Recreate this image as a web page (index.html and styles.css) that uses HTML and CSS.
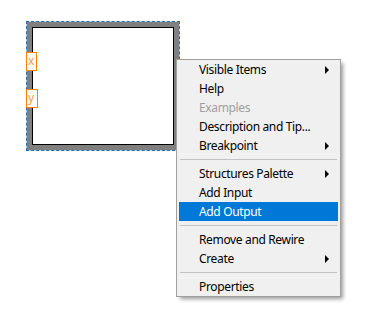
FILE: index.html
```html
<!DOCTYPE html>
<html>
<head>
<meta charset="utf-8">
<link rel="stylesheet" href="styles.css">
</head>
<body>
<div class="canvas">
  <div class="node">
    <div class="frame">
      <div class="pane"></div>
    </div>
    <div class="tag tag-x">x</div>
    <div class="tag tag-y">y</div>
  </div>
  <div class="menu">
    <div class="item sub"><span>Visible Items</span><i class="arrow"></i></div>
    <div class="item"><span>Help</span></div>
    <div class="item disabled"><span>Examples</span></div>
    <div class="item"><span>Description and Tip...</span></div>
    <div class="item sub"><span>Breakpoint</span><i class="arrow"></i></div>
    <div class="sep"></div>
    <div class="item sub"><span>Structures Palette</span><i class="arrow"></i></div>
    <div class="item"><span>Add Input</span></div>
    <div class="item active"><span>Add Output</span></div>
    <div class="sep"></div>
    <div class="item"><span>Remove and Rewire</span></div>
    <div class="item sub"><span>Create</span><i class="arrow"></i></div>
    <div class="sep"></div>
    <div class="item"><span>Properties</span></div>
  </div>
</div>
</body>
</html>
```
FILE: styles.css
```css
html, body {
  margin: 0;
  padding: 0;
  background: #ffffff;
}
.canvas {
  position: relative;
  width: 371px;
  height: 319px;
  padding: 21px 0 0 26px;
  box-sizing: border-box;
  font-family: "Noto Sans", "Open Sans", sans-serif;
}
.node {
  position: relative;
  width: 154px;
  height: 130px;
  box-sizing: border-box;
  border: 1px dashed #2f6da6;
  background: #bcdcf4;
}
.frame {
  width: 152px;
  height: 128px;
  box-sizing: border-box;
  border: 5px solid #808080;
  background: #808080;
}
.pane {
  width: 142px;
  height: 118px;
  box-sizing: border-box;
  border: 1px solid #000000;
  background: #ffffff;
}
.tag {
  position: absolute;
  left: -1px;
  box-sizing: border-box;
  height: 19px;
  border: 1px solid #ff8000;
  background: #ffffff;
  color: #f39a4c;
  font-size: 12px;
  line-height: 16px;
  padding-left: 1px;
}
.tag-x {
  top: 30px;
  width: 11px;
}
.tag-y {
  top: 67px;
  width: 12px;
}
.menu {
  position: absolute;
  left: 176px;
  top: 59px;
  width: 165px;
  box-sizing: border-box;
  background: #f0f0f0;
  border: 1px solid #a0a0a0;
  padding: 0 2px;
  box-shadow: 3px 3px 4px -1px rgba(0, 0, 0, 0.4);
  font-size: 12px;
  letter-spacing: -0.35px;
  color: #000000;
}
.item {
  display: flex;
  align-items: center;
  justify-content: space-between;
  height: 19px;
  padding: 0 9px 0 20px;
  white-space: nowrap;
}
.item.disabled {
  color: #a0a0a0;
}
.item.active {
  background: #0078d7;
  color: #ffffff;
}
.arrow {
  width: 0;
  height: 0;
  border-left: 4px solid #000000;
  border-top: 4px solid transparent;
  border-bottom: 4px solid transparent;
}
.sep {
  height: 9px;
  display: flex;
  align-items: center;
  padding: 0 1px;
}
.sep::before {
  content: "";
  flex: 1;
  height: 1px;
  background: #c3c3c3;
}
```
